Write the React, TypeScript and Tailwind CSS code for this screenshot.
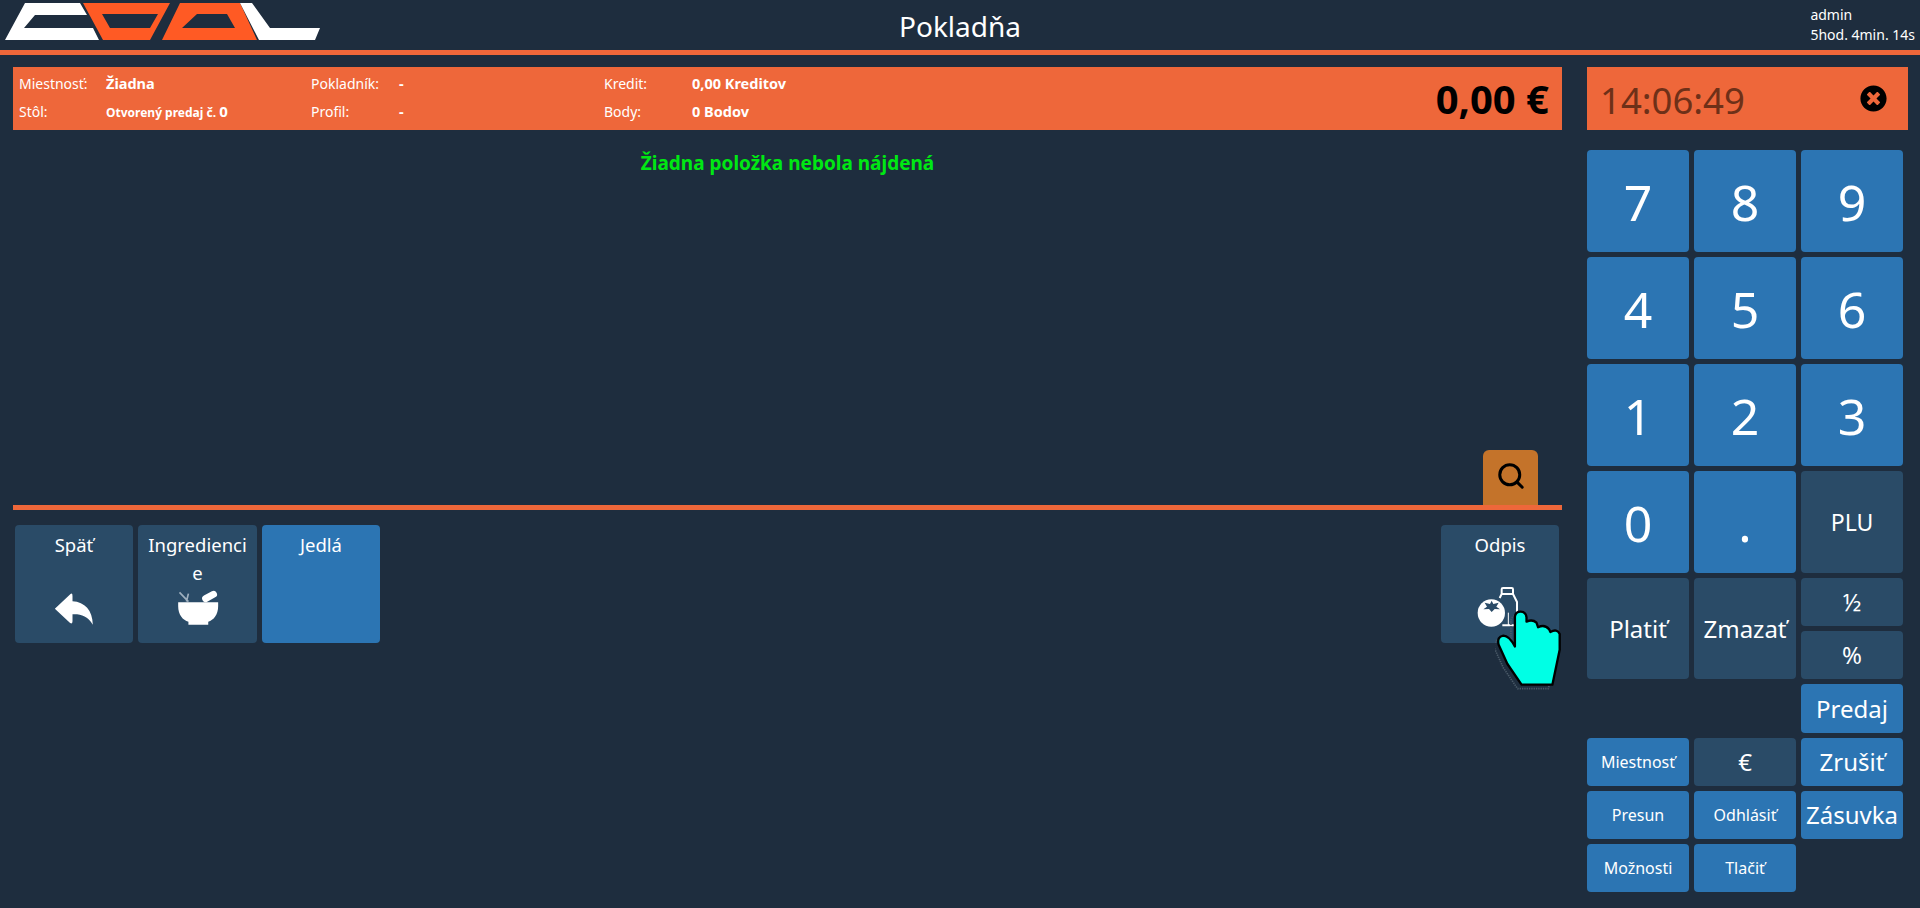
import { FaTimesCircle } from "react-icons/fa";
import { Search } from "lucide-react";

const blue = "bg-[#2c75b3]";
const dark = "bg-[#2a4b67]";

function Logo() {
  return (
    <svg width="325" height="44" viewBox="0 0 325 44" className="block">
      <path fill="#ffffff" d="M25 3H80L87 15H35L24 28H93L99 40H5Z" />
      <path fill="#ff5a24" fillRule="evenodd" d="M83 3H170L150 40H103ZM102 14L110 28H150L158 14Z" />
      <path fill="#ff5a24" fillRule="evenodd" d="M180 3H240L257 40H162ZM197 14L182 28H235L227 14Z" />
      <path fill="#ffffff" d="M240 3H252L270 28H320L315 40H259Z" />
    </svg>
  );
}

function ReplyIcon() {
  return (
    <svg width="42" height="34" viewBox="160 270 125 102" className="block">
      <path fill="#ffffff" d="M165 320L212 276Q218 272 218 282L218 298C255 300 278 325 279 368C262 342 245 336 218 337L218 358Q218 368 210 362Z" />
    </svg>
  );
}

function MortarIcon() {
  return (
    <svg width="44" height="37" viewBox="525 268 132 112" className="block">
      <path stroke="#9fb0bf" strokeWidth="5" fill="none" d="M535 278L562 306M562 282L556 306" />
      <path stroke="#ffffff" strokeWidth="21" strokeLinecap="round" fill="none" d="M614 297L638 284" />
      <path fill="#ffffff" d="M531 308H652V320C652 346 638 362 622 367V376H562V367C545 362 531 346 531 320Z" />
    </svg>
  );
}

function WriteOffIcon() {
  return (
    <svg width="46" height="42" viewBox="178 472 138 126" className="block">
      <path fill="none" stroke="#ffffff" strokeWidth="6" strokeLinejoin="round" d="M252 482Q252 478 256 478H282Q286 478 286 482V496H252ZM252 496L246 508M286 496L298 520V590H254" />
      <path stroke="#ffffff" strokeWidth="3" d="M272 552V590" />
      <circle cx="221" cy="553" r="41" fill="#ffffff" />
      <path fill="#2a4b67" d="M222 516L227 526L243 522L236 534L247 542L231 541L222 550L214 541L197 542L208 534L201 522L217 526Z" />
    </svg>
  );
}

function HandCursor() {
  const hand = "M285 650L285 560Q287 545 302 545Q318 545 320 562L320 575Q338 567 350 578L355 592Q375 582 388 598L392 606Q412 595 420 612L420 660L398 765H305L262 702L236 645Q230 620 250 617Q268 617 285 650Z";
  return (
    <svg width="68" height="82" viewBox="225 535 205 245" className="absolute left-[54px] top-[83px]">
      <path d={hand} transform="translate(-12 12)" fill="none" stroke="#4a5a68" strokeWidth="5" strokeDasharray="4 3" />
      <path d={hand} fill="#00ffe5" stroke="#000000" strokeWidth="7" strokeLinejoin="round" />
      <path d="M286 600V650" stroke="#000000" strokeWidth="3" />
    </svg>
  );
}

function Tile({ label, color, icon, width = "w-[118px]", iconPad = "pb-[17px]", children }: { label: string; color: string; icon?: React.ReactNode; width?: string; iconPad?: string; children?: React.ReactNode }) {
  return (
    <div className={`relative flex h-[118px] flex-col items-center rounded-[4px] pt-[6px] text-center text-[18.5px] leading-[28px] text-white ${width} ${color}`}>
      <div className="w-full break-all px-[7px]">{label}</div>
      {icon && <div className={`mt-auto flex ${iconPad}`}>{icon}</div>}
      {children}
    </div>
  );
}

function Key({ label, color, size, className = "" }: { label: string; color: string; size: string; className?: string }) {
  return (
    <div className={`flex items-center justify-center rounded-[4px] leading-none text-white ${color} ${size} ${className}`}>
      {label}
    </div>
  );
}

function InfoField({ label, value, labelWidth }: { label: string; value: React.ReactNode; labelWidth: string }) {
  return (
    <div className="flex h-[28px] items-center text-[14px] text-white">
      <div className={labelWidth}>{label}</div>
      <div className="text-[14.5px] font-bold">{value}</div>
    </div>
  );
}

export default function App() {
  return (
    <div className="h-screen overflow-hidden bg-[#1e2d3e] font-['Noto_Sans','Open_Sans',sans-serif]">
      <header className="grid h-[55px] grid-cols-[1fr_auto_1fr] border-b-[5px] border-[#ee673a] text-white">
        <div className="flex items-start"><Logo /></div>
        <div className="self-center pt-[2px] text-[28px] leading-none">Pokladňa</div>
        <div className="justify-self-end pr-[5px] pt-[5px] text-[14px] leading-[20px]">
          <div>admin</div>
          <div>5hod. 4min. 14s</div>
        </div>
      </header>

      <div className="flex pt-[12px]">
        <main className="ml-[13px] w-[1549px]">
          <div className="flex h-[63px] items-center bg-[#ee673a] pb-[2px] pl-[6px] pr-[13px]">
            <div className="w-[292px]">
              <InfoField label="Miestnosť:" labelWidth="w-[87px]" value="Žiadna" />
              <InfoField
                label="Stôl:"
                labelWidth="w-[87px]"
                value={<><span className="text-[12px]">Otvorený predaj č. </span><span className="text-[15px]">0</span></>}
              />
            </div>
            <div className="w-[293px]">
              <InfoField label="Pokladník:" labelWidth="w-[88px]" value="-" />
              <InfoField label="Profil:" labelWidth="w-[88px]" value="-" />
            </div>
            <div>
              <InfoField label="Kredit:" labelWidth="w-[88px]" value="0,00 Kreditov" />
              <InfoField label="Body:" labelWidth="w-[88px]" value="0 Bodov" />
            </div>
            <div className="ml-auto pt-[2px] text-[40px] font-bold leading-none text-black">0,00 €</div>
          </div>

          <div className="flex h-[375px] flex-col">
            <div className="pt-[20px] text-center text-[19px] font-bold leading-[26px] text-[#00e813]">
              Žiadna položka nebola nájdená
            </div>
            <div className="mr-[24px] mt-auto flex h-[55px] w-[55px] items-start justify-center self-end rounded-t-[6px] bg-[#c4732a] pt-[11px] text-black">
              <Search size={30} strokeWidth={2.4} />
            </div>
          </div>
          <div className="h-[5px] bg-[#ee673a]" />

          <div className="flex justify-between pl-[2px] pr-[3px] pt-[15px]">
            <div className="flex gap-[5px]">
              <Tile label="Späť" color={dark} icon={<ReplyIcon />} />
              <Tile label="Ingrediencie" color={dark} width="w-[119px]" icon={<MortarIcon />} />
              <Tile label="Jedlá" color={blue} />
            </div>
            <Tile label="Odpis" color={dark} iconPad="pb-[15px]" icon={<WriteOffIcon />}>
              <HandCursor />
            </Tile>
          </div>
        </main>

        <aside className="ml-[25px] w-[321px]">
          <div className="flex h-[63px] items-center justify-between bg-[#ee673a] pl-[13px] pr-[21px]">
            <span className="pt-[3px] text-[36.5px] leading-none text-[#6e3018]">14:06:49</span>
            <FaTimesCircle size={27} color="#000000" />
          </div>

          <div className="mt-[20px] grid grid-cols-[102px_102px_102px] grid-rows-[102px_102px_102px_102px_48px_48px_49px_48px_48px_48px] gap-[5px]">
            <Key label="7" color={blue} size="pt-[2px] text-[50px]" />
            <Key label="8" color={blue} size="pt-[2px] text-[50px]" />
            <Key label="9" color={blue} size="pt-[2px] text-[50px]" />
            <Key label="4" color={blue} size="pt-[2px] text-[50px]" />
            <Key label="5" color={blue} size="pt-[2px] text-[50px]" />
            <Key label="6" color={blue} size="pt-[2px] text-[50px]" />
            <Key label="1" color={blue} size="pt-[2px] text-[50px]" />
            <Key label="2" color={blue} size="pt-[2px] text-[50px]" />
            <Key label="3" color={blue} size="pt-[2px] text-[50px]" />
            <Key label="0" color={blue} size="pt-[2px] text-[50px]" />
            <Key label="." color={blue} size="pt-[2px] text-[50px]" />
            <Key label="PLU" color={dark} size="text-[23px]" />
            <Key label="Platiť" color={dark} size="text-[24px]" className="row-span-2" />
            <Key label="Zmazať" color={dark} size="text-[24px]" className="row-span-2" />
            <Key label="½" color={dark} size="text-[24px]" />
            <Key label="%" color={dark} size="text-[24px]" />
            <Key label="Predaj" color={blue} size="text-[24px]" className="col-start-3" />
            <Key label="Miestnosť" color={blue} size="text-[16px]" />
            <Key label="€" color={dark} size="text-[24px]" />
            <Key label="Zrušiť" color={blue} size="text-[24px]" />
            <Key label="Presun" color={blue} size="text-[16px]" />
            <Key label="Odhlásiť" color={blue} size="text-[16px]" />
            <Key label="Zásuvka" color={blue} size="text-[24px]" />
            <Key label="Možnosti" color={blue} size="text-[16px]" />
            <Key label="Tlačiť" color={blue} size="text-[16px]" />
          </div>
        </aside>
      </div>
    </div>
  );
}
